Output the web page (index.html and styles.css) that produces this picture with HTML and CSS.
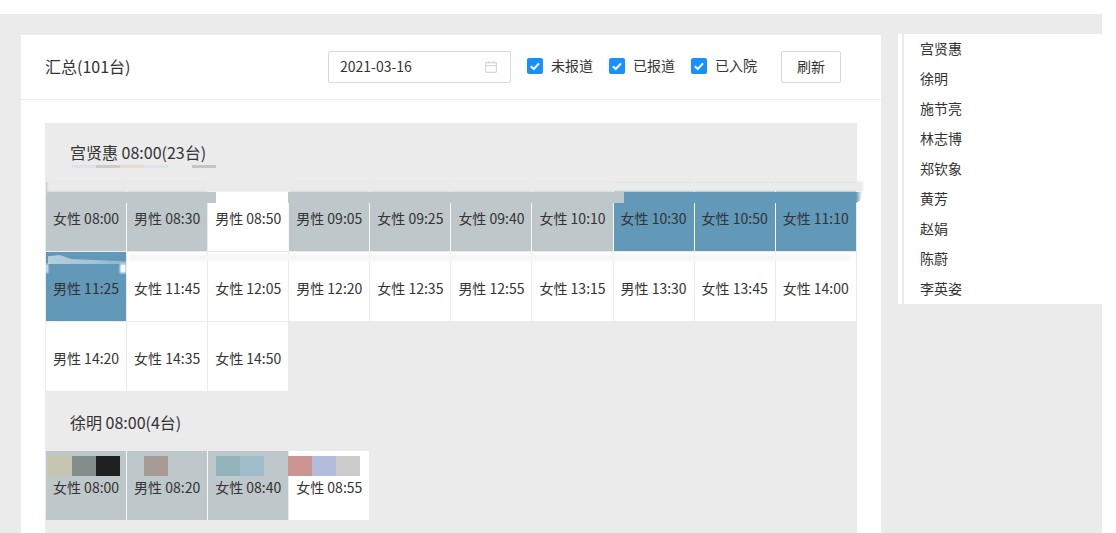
FILE: index.html
```html
<!DOCTYPE html>
<html lang="zh-CN">
<head>
    <meta charset="UTF-8">
    <meta name="viewport" content="width=device-width, initial-scale=1.0">
    <title>汇总</title>
    <link rel="stylesheet" href="styles.css">
</head>
<body>
    <div class="page">
        <div class="main">
            <div class="main-head">
                <div class="main-title">汇总(101台)</div>
                <div class="tools">
                    <div class="date-box">
                        <span class="date-text">2021-03-16</span>
                        <svg width="14" height="14" viewBox="0 0 14 14" fill="none" stroke="#d9d9d9" stroke-width="1.2">
                            <rect x="1.6" y="2.6" width="10.8" height="9.8" rx="0.8"/>
                            <path d="M1.6 5.6H12.4M4.4 1V3.6M9.6 1V3.6"/>
                        </svg>
                    </div>
                    <div class="check-item"><span class="check-box"><svg width="16" height="16" viewBox="0 0 16 16" fill="none" stroke="#fff" stroke-width="2"><path d="M3.8 8.2L6.8 11L12 5.4"/></svg></span><span class="check-label">未报道</span></div>
                    <div class="check-item"><span class="check-box"><svg width="16" height="16" viewBox="0 0 16 16" fill="none" stroke="#fff" stroke-width="2"><path d="M3.8 8.2L6.8 11L12 5.4"/></svg></span><span class="check-label">已报道</span></div>
                    <div class="check-item"><span class="check-box"><svg width="16" height="16" viewBox="0 0 16 16" fill="none" stroke="#fff" stroke-width="2"><path d="M3.8 8.2L6.8 11L12 5.4"/></svg></span><span class="check-label">已入院</span></div>
                    <button class="refresh-btn">刷新</button>
                </div>
            </div>

            <div class="main-body">
                <div class="group">
                    <div class="group-title">宫贤惠 08:00(23台)<span class="smudge title-smudge"></span></div>
                    <div class="slots">
                        <div class="slot done">女性 08:00</div>
                        <div class="slot done">男性 08:30</div>
                        <div class="slot">男性 08:50</div>
                        <div class="slot done">男性 09:05</div>
                        <div class="slot done">女性 09:25</div>
                        <div class="slot done">女性 09:40</div>
                        <div class="slot done">女性 10:10</div>
                        <div class="slot active">女性 10:30</div>
                        <div class="slot active">女性 10:50</div>
                        <div class="slot active">女性 11:10</div>
                        <div class="slot active">男性 11:25</div>
                        <div class="slot">女性 11:45</div>
                        <div class="slot">女性 12:05</div>
                        <div class="slot">男性 12:20</div>
                        <div class="slot">女性 12:35</div>
                        <div class="slot">男性 12:55</div>
                        <div class="slot">女性 13:15</div>
                        <div class="slot">男性 13:30</div>
                        <div class="slot">女性 13:45</div>
                        <div class="slot">女性 14:00</div>
                        <div class="slot">男性 14:20</div>
                        <div class="slot">女性 14:35</div>
                        <div class="slot">女性 14:50</div>
                        <span class="smudge head-smudge"></span>
                        <span class="smudge row-smudge"></span>
                        <span class="smudge second-smudge"></span>
                        <span class="smudge blue-smudge"></span>
                        <span class="smudge blue-edge"></span>
                    </div>
                </div>

                <div class="group">
                    <div class="group-title">徐明 08:00(4台)</div>
                    <div class="slots">
                        <div class="slot done">女性 08:00</div>
                        <div class="slot done">男性 08:20</div>
                        <div class="slot done">女性 08:40</div>
                        <div class="slot">女性 08:55</div>
                        <span class="smudge swatch-smudge"></span>
                    </div>
                </div>
            </div>
        </div>

        <div class="side">
            <div class="side-list">
                <div class="side-item">宫贤惠</div>
                <div class="side-item">徐明</div>
                <div class="side-item">施节亮</div>
                <div class="side-item">林志博</div>
                <div class="side-item">郑钦象</div>
                <div class="side-item">黄芳</div>
                <div class="side-item">赵娟</div>
                <div class="side-item">陈蔚</div>
                <div class="side-item">李英姿</div>
            </div>
        </div>
    </div>
</body>
</html>
```

FILE: styles.css
```css
html, body {
    margin: 0;
    padding: 0;
    height: 533px;
    overflow: hidden;
    background: #fff;
}
body {
    font-family: "Noto Sans CJK SC", "Noto Sans", sans-serif;
    font-size: 14px;
    color: #333;
}
.page {
    display: flex;
    align-items: flex-start;
    width: 1102px;
    height: 519px;
    margin-top: 14px;
    padding: 20px 0 0 21px;
    box-sizing: border-box;
    background: #ebebeb;
    overflow: hidden;
}
/* Main card */
.main {
    width: 860px;
    height: 600px;
    margin-top: 1px;
    flex-shrink: 0;
    background: #fff;
}
.main-head {
    display: flex;
    justify-content: space-between;
    align-items: center;
    height: 64px;
    padding: 0 40px 0 24px;
    border-bottom: 1px solid #ebebeb;
}
.main-title {
    margin-bottom: 2px;
    font-size: 16px;
}
.tools {
    display: flex;
    align-items: center;
}
.date-box {
    display: flex;
    justify-content: space-between;
    align-items: center;
    width: 183px;
    height: 32px;
    padding: 0 12px 0 11px;
    margin-right: 16px;
    box-sizing: border-box;
    border: 1px solid #d9d9d9;
    border-radius: 2px;
}
.date-text {
    margin-bottom: 2px;
}
.check-item {
    display: flex;
    align-items: center;
    margin-right: 16px;
    margin-bottom: 2px;
}
.check-box {
    display: block;
    width: 16px;
    height: 16px;
    margin-right: 8px;
    background: #1890ff;
    border-radius: 2px;
}
.check-box svg {
    display: block;
}
.check-label {
    margin-bottom: 2px;
}
.refresh-btn {
    width: 60px;
    height: 32px;
    margin-left: 8px;
    padding: 0 0 2px;
    font: inherit;
    color: #333;
    background: #fff;
    border: 1px solid #d9d9d9;
    border-radius: 2px;
}
.main-body {
    margin: 23px 24px 0;
    height: 500px;
    background: #ebebeb;
}
/* Doctor groups */
.group-title {
    position: relative;
    height: 59px;
    padding-left: 25px;
    font-size: 16px;
    line-height: 59px;
}
.group + .group .group-title {
    line-height: 61px;
}
.slots {
    position: relative;
    display: grid;
    grid-template-columns: repeat(10, 81.09px);
    grid-auto-rows: 69px;
    row-gap: 1px;
    padding-bottom: 1px;
}
.slot {
    height: 69px;
    padding-top: 5px;
    box-sizing: border-box;
    border-left: 1px solid #ebebeb;
    line-height: 62px;
    text-align: center;
    white-space: nowrap;
    background: #fff;
    background-clip: padding-box;
}
.slot.done {
    background-color: #bec7c9;
    border-left-color: #f8f8f8;
}
.slot.active {
    background-color: #6298b8;
    border-left-color: #f8f8f8;
}
.slot:nth-child(10n+1) {
    border-left-color: #ebebeb;
}
/* Blurred-out patches lying over the cells */
.smudge {
    position: absolute;
    display: block;
}
.title-smudge {
    left: 27px;
    top: 42px;
    width: 144px;
    height: 3px;
    background: linear-gradient(90deg, #dfe3e8 0 24px, #cdcbc9 24px 48px, #e5dccf 48px 72px, #dbe4ea 72px 96px, transparent 96px 120px, #c8c4c2 120px);
}
.head-smudge {
    left: 2px;
    top: -1px;
    width: 816px;
    height: 11px;
    background: #ebebeb;
    filter: blur(1px);
}
.row-smudge {
    left: 3px;
    top: 10px;
    width: 814px;
    height: 11px;
    background: linear-gradient(90deg, #bec7c9 0 168px, #fff 168px 240px, #bec7c9 240px 576px, #6298b8 576px 808px, transparent 814px);
    border-radius: 0 0 8px 0;
}
.second-smudge {
    left: 84px;
    top: 72px;
    width: 720px;
    height: 7px;
    background: #f6f6f6;
    filter: blur(1.5px);
}
.blue-smudge {
    left: 3px;
    top: 73px;
    width: 78px;
    height: 9px;
    background: linear-gradient(90deg, #b4cfde, #a3c2d5 60%, #8db4cc);
    clip-path: polygon(0 15%, 15% 0, 30% 45%, 60% 55%, 100% 70%, 100% 100%, 0 100%);
    filter: blur(0.6px);
}
.blue-edge {
    left: 1px;
    top: 82px;
    width: 80px;
    height: 9px;
    background: linear-gradient(90deg, #fff 0 2px, transparent 2px 74px, #fff 74px);
    filter: blur(0.8px);
}
.swatch-smudge {
    left: 3px;
    top: 5px;
    width: 312px;
    height: 20px;
    background: linear-gradient(90deg, #c5c5b2 0 24px, #838d8a 24px 48px, #1f2120 48px 72px, transparent 72px 96px, #a89a94 96px 120px, transparent 120px 168px, #93b3bb 168px 192px, #9fbccb 192px 216px, transparent 216px 240px, #cc9493 240px 264px, #b4bcdb 264px 288px, #cbcbcb 288px);
    filter: blur(0.6px);
}
/* Side list */
.side {
    width: 204px;
    height: 270px;
    margin-left: 17px;
    padding-left: 4px;
    box-sizing: border-box;
    flex-shrink: 0;
    background: #fff;
}
.side-list {
    height: 100%;
    padding-left: 16px;
    border-left: 2px solid #ebebeb;
}
.side-item {
    height: 30px;
    line-height: 28px;
}
```
